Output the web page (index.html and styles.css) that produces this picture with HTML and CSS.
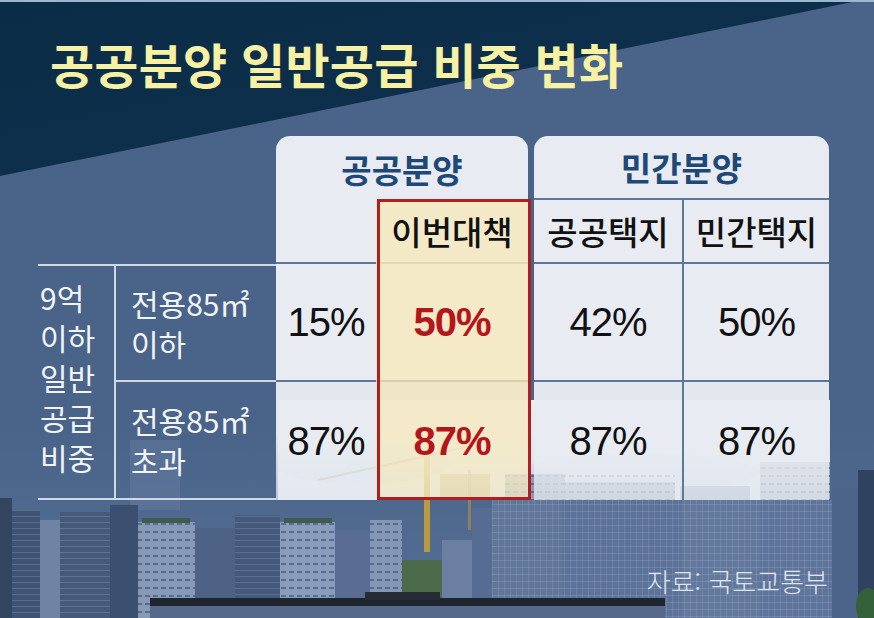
FILE: index.html
```html
<!DOCTYPE html>
<html lang="ko">
<head>
<meta charset="utf-8">
<title>공공분양 일반공급 비중 변화</title>
<link rel="stylesheet" href="styles.css">
</head>
<body>
<div class="poster">
  <svg class="photo" width="874" height="618" viewBox="0 0 874 618" aria-hidden="true">
    <defs>
      <pattern id="grid" width="6" height="7" patternUnits="userSpaceOnUse">
        <rect x="0" y="0" width="6" height="1" fill="#a9b9cf" opacity=".25"/>
        <rect x="0" y="0" width="1" height="7" fill="#a9b9cf" opacity=".2"/>
      </pattern>
      <pattern id="stripe" width="8" height="8" patternUnits="userSpaceOnUse">
        <rect x="1" y="3" width="5" height="2" fill="#34465f" opacity=".55"/>
      </pattern>
      <pattern id="glass" width="5" height="6" patternUnits="userSpaceOnUse">
        <rect x="0" y="0" width="5" height="1" fill="#8a9cb8" opacity=".35"/>
      </pattern>
      <linearGradient id="sky" x1="0" y1="0" x2="0" y2="1">
        <stop offset="0" stop-color="#e8edf3"/>
        <stop offset="1" stop-color="#d6e0ea"/>
      </linearGradient>
      <linearGradient id="diag" x1="0" y1="0" x2="1" y2="1">
        <stop offset="0" stop-color="#0b2c47"/>
        <stop offset="1" stop-color="#10324e"/>
      </linearGradient>
      <linearGradient id="haze" x1="0" y1="0" x2="0" y2="1">
        <stop offset="0" stop-color="#4a6388"/>
        <stop offset="1" stop-color="#566f96"/>
      </linearGradient>
      <clipPath id="skyclip">
        <rect x="278" y="400" width="552" height="100"/>
      </clipPath>
    </defs>
    <rect width="874" height="618" fill="#4a6388"/>
    <rect x="0" y="430" width="874" height="188" fill="url(#haze)"/>
    <polygon points="0,0 862,0 0,176" fill="url(#diag)"/>
    <rect width="874" height="2" fill="#9db7d0"/>

    <g clip-path="url(#skyclip)">
      <rect x="278" y="400" width="552" height="100" fill="url(#sky)"/>
      <ellipse cx="360" cy="462" rx="90" ry="22" fill="#c6d3e2" opacity=".6"/>
      <ellipse cx="640" cy="472" rx="120" ry="18" fill="#c9d6e4" opacity=".6"/>
      <rect x="505" y="474" width="60" height="30" fill="#8e9bb0"/>
      <rect x="565" y="482" width="110" height="22" fill="#97a3b6"/>
      <rect x="680" y="486" width="70" height="18" fill="#9aa6b8"/>
      <rect x="760" y="462" width="70" height="42" fill="#a3aec0"/>
      <rect x="760" y="462" width="70" height="42" fill="url(#stripe)"/>
      <rect x="505" y="474" width="170" height="30" fill="url(#stripe)"/>
      <rect x="440" y="474" width="50" height="30" fill="#b9ad86"/>
    </g>

    <rect x="130" y="440" width="50" height="70" fill="#6f86aa" opacity=".35"/>

    <g>
      <rect x="0" y="498" width="12" height="120" fill="#34465f"/>
      <rect x="12" y="510" width="28" height="108" fill="#3f5475"/>
      <rect x="12" y="510" width="28" height="108" fill="url(#glass)"/>
      <rect x="40" y="520" width="20" height="98" fill="#6f83a5"/>
      <rect x="60" y="512" width="50" height="106" fill="#45597b"/>
      <rect x="60" y="512" width="50" height="106" fill="url(#glass)"/>
      <rect x="110" y="505" width="28" height="113" fill="#3b4f70"/>
      <rect x="138" y="522" width="57" height="96" fill="#8799b8"/>
      <rect x="138" y="522" width="57" height="96" fill="url(#stripe)"/>
      <rect x="142" y="518" width="48" height="5" fill="#3f5a4e"/>
      <rect x="195" y="528" width="40" height="90" fill="#4d6285"/>
      <rect x="235" y="515" width="45" height="103" fill="#44597c"/>
      <rect x="235" y="515" width="45" height="103" fill="url(#glass)"/>
      <rect x="280" y="522" width="55" height="96" fill="#8a9cbb"/>
      <rect x="280" y="522" width="55" height="96" fill="url(#stripe)"/>
      <rect x="284" y="518" width="48" height="5" fill="#3f5a4e"/>
      <rect x="335" y="530" width="35" height="88" fill="#586d91"/>
      <rect x="370" y="520" width="32" height="98" fill="#8497b6"/>
      <rect x="370" y="520" width="32" height="98" fill="url(#stripe)"/>
      <rect x="402" y="560" width="40" height="58" fill="#4c6b4a"/>
      <rect x="442" y="540" width="30" height="78" fill="#6a7fa1"/>
      <rect x="472" y="508" width="20" height="110" fill="#566c92"/>
      <rect x="492" y="500" width="70" height="118" fill="#61769b"/>
      <rect x="492" y="500" width="70" height="118" fill="url(#grid)"/>
      <rect x="562" y="500" width="120" height="118" fill="#5d7299"/>
      <rect x="562" y="500" width="120" height="118" fill="url(#grid)"/>
      <rect x="682" y="500" width="78" height="118" fill="#63789d"/>
      <rect x="682" y="500" width="78" height="118" fill="url(#grid)"/>
      <rect x="760" y="500" width="72" height="118" fill="#5f749b"/>
      <rect x="760" y="500" width="72" height="118" fill="url(#grid)"/>
      <rect x="832" y="488" width="26" height="130" fill="#4c6489"/>
      <rect x="858" y="470" width="16" height="148" fill="#2f4260"/>
      <ellipse cx="868" cy="606" rx="12" ry="18" fill="#35613a"/>
      <rect x="150" y="598" width="515" height="8" fill="#1e252f"/>
      <rect x="150" y="606" width="515" height="12" fill="#56698a"/>
      <rect x="365" y="592" width="75" height="8" fill="#262c35"/>
    </g>
    <g>
      <rect x="424" y="452" width="6" height="100" fill="#b99a3e"/>
      <line x1="318" y1="480" x2="472" y2="446" stroke="#a89a6c" stroke-width="2"/>
      <rect x="468" y="470" width="3" height="60" fill="#a48d4c" opacity=".7"/>
    </g>
  </svg>

  <div class="content">
    <h1 class="title">공공분양 일반공급 비중 변화</h1>

    <div class="table">
      <div class="grp grp-pub">공공분양</div>
      <div class="grp grp-pri">민간분양</div>
      <div class="hcell blank"></div>
      <div class="hcell cur">이번대책</div>
      <div class="hcell sub c6">공공택지</div>
      <div class="hcell sub c7">민간택지</div>

      <div class="lab-main">9억<br>이하<br>일반<br>공급<br>비중</div>
      <div class="lab-sub r1">전용85㎡<br>이하</div>
      <div class="lab-sub r2">전용85㎡<br>초과</div>

      <div class="cell r1 c3">15%</div>
      <div class="cell r1 c4 hi">50%</div>
      <div class="cell r1 c6">42%</div>
      <div class="cell r1 c7">50%</div>

      <div class="cell r2 c3">87%</div>
      <div class="cell r2 c4 hi">87%</div>
      <div class="cell r2 c6">87%</div>
      <div class="cell r2 c7">87%</div>

      <div class="redbox"></div>
    </div>

    <p class="source">자료: 국토교통부</p>
  </div>
</div>
</body>
</html>
```

FILE: styles.css
```css
body {
  margin: 0;
}

.poster {
  position: relative;
  width: 874px;
  height: 618px;
  overflow: hidden;
  background: #4a6388;
  font-family: "Noto Sans CJK KR", "Noto Sans", sans-serif;
}

.photo {
  position: absolute;
  left: 0;
  top: 0;
}

.content {
  position: relative;
  height: 100%;
  box-sizing: border-box;
  display: flex;
  flex-direction: column;
}

.title {
  margin: 39px 0 0 50px;
  font-size: 48px;
  line-height: 48px;
  font-weight: 700;
  color: #f7f1a3;
  white-space: nowrap;
  letter-spacing: 0.2px;
}

.table {
  margin: 49px 0 0 38px;
  display: grid;
  grid-template-columns: 78px 160px 100px 152px 6px 148px 147px;
  grid-template-rows: 64px 64px 118px 118px;
}

.grp {
  grid-row: 1;
  background: #e8ecf2;
  border-radius: 14px 14px 0 0;
  display: flex;
  align-items: center;
  justify-content: center;
  color: #1e4877;
  font-size: 33px;
  font-weight: 700;
  box-sizing: border-box;
}

.grp-pub {
  grid-column: 3 / 5;
  padding-top: 2px;
}

.grp-pri {
  grid-column: 6 / 8;
  border-bottom: 2px solid #5d7898;
}

.hcell {
  grid-row: 2;
  background: #e8ecf2;
  border-bottom: 2px solid #5d7898;
  display: flex;
  align-items: center;
  justify-content: center;
  font-size: 33px;
  font-weight: 500;
  color: #111;
  box-sizing: border-box;
}

.blank {
  grid-column: 3;
}

.cur {
  grid-column: 4;
  background: #f4e9c6;
  border-bottom-color: #e2d7b5;
}

.c3 { grid-column: 3; }
.c4 { grid-column: 4; }
.c6 { grid-column: 6; }
.c7 { grid-column: 7; border-left: 2px solid #5d7898; }

.lab-main {
  grid-column: 1;
  grid-row: 3 / 5;
  border-top: 2px solid #d0d8e3;
  border-bottom: 2px solid #d0d8e3;
  border-right: 2px solid #d0d8e3;
  color: #f1f4f8;
  font-size: 30px;
  line-height: 40px;
  padding: 11px 0 0 2px;
}

.lab-sub {
  grid-column: 2;
  display: flex;
  align-items: center;
  padding-left: 15px;
  color: #f1f4f8;
  font-size: 30px;
  line-height: 40px;
}

.lab-sub.r1 {
  grid-row: 3;
  border-top: 2px solid #d0d8e3;
  border-bottom: 2px solid #d0d8e3;
}

.lab-sub.r2 {
  grid-row: 4;
  border-bottom: 2px solid #d0d8e3;
}

.cell {
  display: flex;
  align-items: center;
  justify-content: center;
  font-family: "Liberation Sans", Arial, sans-serif;
  font-size: 40px;
  letter-spacing: -1px;
  color: #111;
  background: #e8ecf2;
  box-sizing: border-box;
}

.cell.r1 {
  grid-row: 3;
  border-bottom: 2px solid #5d7898;
}

.cell.r2 {
  grid-row: 4;
  background: linear-gradient(to bottom, rgba(232, 236, 242, 0.97) 45%, rgba(232, 236, 242, 0.7));
}

.cell.hi {
  color: #b3161b;
  font-weight: 700;
  background: #f4eac8;
  border-bottom-color: #d9cfae;
}

.cell.r2.hi {
  background: linear-gradient(to bottom, rgba(244, 234, 200, 0.97) 45%, rgba(244, 234, 200, 0.75));
}

.redbox {
  grid-column: 4;
  grid-row: 2 / 5;
  border: 3px solid #b11d22;
  margin: -1px -3px 0 1px;
}

.source {
  margin: 68px 46px 0 0;
  align-self: flex-end;
  font-size: 26px;
  line-height: 26px;
  font-weight: 300;
  color: #dfe6ee;
}
```
